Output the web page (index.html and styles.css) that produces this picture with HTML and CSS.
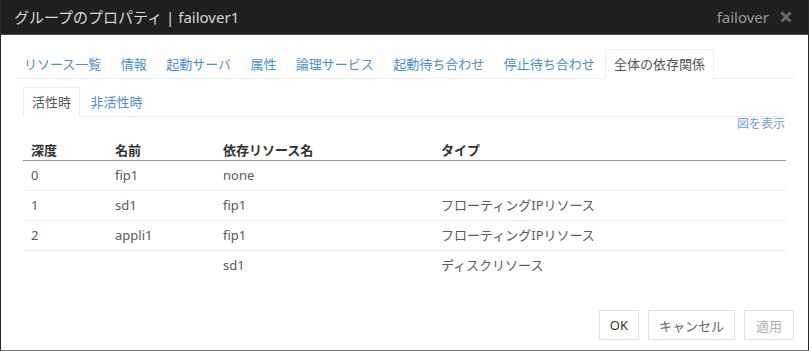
FILE: index.html
```html
<!DOCTYPE html>
<html lang="ja">
<head>
  <meta charset="UTF-8">
  <title>グループのプロパティ</title>
  <link rel="stylesheet" href="styles.css">
</head>
<body>

<div class="dialog">
  <div class="titlebar">
    <span class="title">グループのプロパティ | failover1</span>
    <span class="title-right">
      failover
      <svg class="close" width="12" height="12" viewBox="0 0 12 12">
        <path d="M1.5 1.5 L10.5 10.5 M10.5 1.5 L1.5 10.5" stroke="#6a6a6a" stroke-width="2.8" fill="none"/>
      </svg>
    </span>
  </div>

  <div class="content">
    <ul class="tabs">
      <li><a>リソース一覧</a></li>
      <li><a>情報</a></li>
      <li><a>起動サーバ</a></li>
      <li><a>属性</a></li>
      <li><a>論理サービス</a></li>
      <li><a>起動待ち合わせ</a></li>
      <li><a>停止待ち合わせ</a></li>
      <li class="active"><a>全体の依存関係</a></li>
    </ul>

    <div class="pane">
      <ul class="tabs sub">
        <li class="active"><a>活性時</a></li>
        <li><a>非活性時</a></li>
      </ul>

      <div class="link-row"><a>図を表示</a></div>

      <table class="deps">
        <thead>
          <tr>
            <th class="c-depth">深度</th>
            <th class="c-name">名前</th>
            <th class="c-dep">依存リソース名</th>
            <th>タイプ</th>
          </tr>
        </thead>
        <tbody>
          <tr><td>0</td><td>fip1</td><td>none</td><td></td></tr>
          <tr><td>1</td><td>sd1</td><td>fip1</td><td>フローティングIPリソース</td></tr>
          <tr><td>2</td><td>appli1</td><td>fip1</td><td>フローティングIPリソース</td></tr>
          <tr><td></td><td></td><td>sd1</td><td>ディスクリソース</td></tr>
        </tbody>
      </table>
    </div>

    <div class="footer">
      <button class="btn btn-ok">OK</button>
      <button class="btn">キャンセル</button>
      <button class="btn btn-disabled">適用</button>
    </div>
  </div>
</div>

</body>
</html>
```

FILE: styles.css
```css
* { box-sizing: border-box; margin: 0; padding: 0; }
html, body { height: 100%; }
body {
  font-family: "Noto Sans", "Noto Sans CJK JP", sans-serif;
  font-size: 13px;
  color: #5a5a5a;
  background: #fff;
}
.dialog {
  height: 100vh;
  display: flex;
  flex-direction: column;
  border-left: 1px solid #2a2a2a;
  border-right: 1px solid #2a2a2a;
  border-bottom: 1px solid #7a7a7a;
}
.titlebar {
  height: 35px;
  background: #1f1f1f;
  border-bottom: 1px solid #4a4a4a;
  display: flex;
  align-items: center;
  justify-content: space-between;
  padding: 0 16px 0 13px;
  font-size: 15px;
  line-height: 20px;
}
.title { color: #d8d8d8; }
.title-right {
  color: #9a9a9a;
  display: flex;
  align-items: center;
  gap: 11px;
}
.content {
  flex: 1;
  display: flex;
  flex-direction: column;
  padding: 14px 14px 10px 14px;
}
.tabs {
  list-style: none;
  display: flex;
  border-bottom: 1px solid #eee;
}
.tabs li { margin-right: 1.4px; margin-bottom: -1px; }
.tabs a {
  display: block;
  padding: 6px 8px;
  line-height: 16px;
  border: 1px solid transparent;
  color: #4a90d0;
}
.tabs li.active a {
  color: #555;
  border-color: #eee #eee transparent #eee;
  background: #fff;
}
.pane {
  padding: 8px 8px 0 8px;
}
.link-row {
  text-align: right;
  line-height: 14px;
  padding-right: 1px;
  font-size: 12px;
}
.link-row a { color: #6ea4d8; }
.deps {
  width: 100%;
  border-collapse: collapse;
}
.deps th {
  text-align: left;
  color: #333;
  font-weight: bold;
  padding: 11px 8px 2px 8px;
  line-height: 16px;
  border-bottom: 1px solid #999;
}
.deps td {
  padding: 6px 8px;
  line-height: 17px;
  height: 30px;
}
.deps tbody tr + tr td { border-top: 1px solid #eee; }
.c-depth { width: 84px; }
.c-name { width: 108px; }
.c-dep { width: 218px; }
.footer {
  margin-top: auto;
  display: flex;
  justify-content: flex-end;
  gap: 9px;
}
.btn {
  height: 30px;
  padding: 0 10px;
  background: #fff;
  border: 1px solid #e0e0e0;
  font-family: inherit;
  font-size: 13px;
  color: #666;
}
.btn-ok { color: #333; }
.btn-disabled { color: #b0b0b0; padding: 0 11px; }
```
